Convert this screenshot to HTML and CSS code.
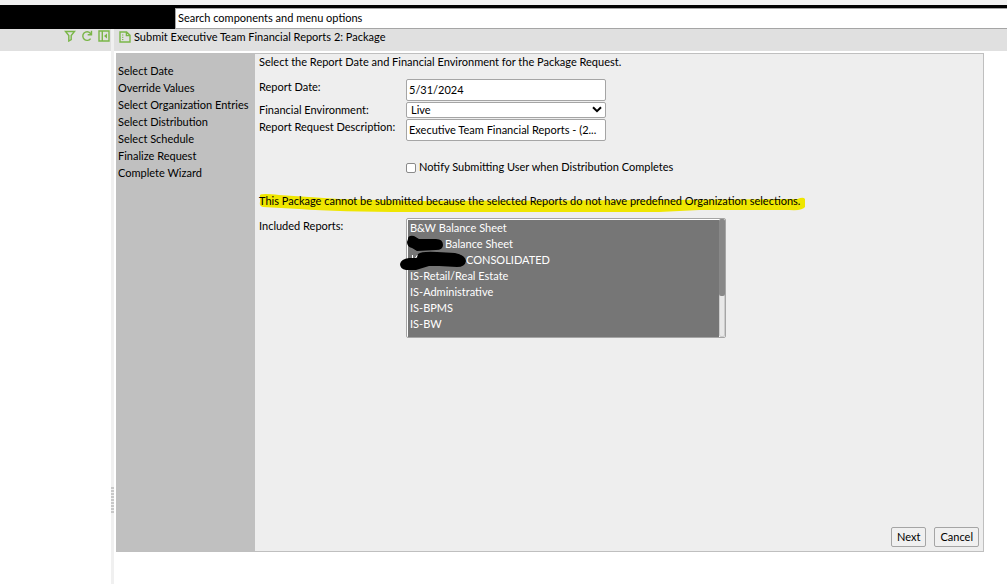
FILE: index.html
```html
<!DOCTYPE html>
<html lang="en">
<head>
<meta charset="utf-8">
<title>Submit Executive Team Financial Reports</title>
<link rel="stylesheet" href="styles.css">
</head>
<body>
<header class="topbar">
  <input class="search" type="text" aria-label="Search components and menu options" value="Search components and menu options">
</header>
<div class="workspace">
  <aside class="side">
    <div class="toolbar side-tools">
      <button class="tool" type="button" aria-label="Filter"><svg width="12" height="12" viewBox="0 0 12 12"><path d="M1.5 1.5h9L7.2 5.6v4L4.8 11V5.6z"/></svg></button>
      <button class="tool" type="button" aria-label="Refresh"><svg width="12" height="12" viewBox="0 0 12 12"><path d="M9.6 8.6A4.3 4.3 0 1 1 9.3 3.2L10.4 4.4M10.5.8v4H6.7"/></svg></button>
      <button class="tool" type="button" aria-label="Collapse panel"><svg width="12" height="12" viewBox="0 0 12 12"><path d="M1 1h10v10H1zM4.3 1v10"/><path class="solid" d="M9 3.6v4.8L6 6z"/></svg></button>
    </div>
  </aside>
  <div class="splitter"><span class="grip"></span></div>
  <main class="content">
    <div class="toolbar title">
      <svg width="12" height="12" viewBox="0 0 12 12"><path d="M1 1h6.6L11 4.4V11H1zM7.4 1v3.6H11"/><path class="thin" d="M3 4h1.4M3 6.3h1.4M3 8.6h1.4"/></svg>
      <span>Submit Executive Team Financial Reports 2: Package</span>
    </div>
    <form class="wizard">
      <nav class="steps">
        <span>Select Date</span>
        <span>Override Values</span>
        <span>Select Organization Entries</span>
        <span>Select Distribution</span>
        <span>Select Schedule</span>
        <span>Finalize Request</span>
        <span>Complete Wizard</span>
      </nav>
      <section class="page">
        <p class="intro">Select the Report Date and Financial Environment for the Package Request.</p>
        <div class="fields">
          <label for="date">Report Date:</label>
          <input class="box" id="date" type="text" value="5/31/2024">
          <label for="env">Financial Environment:</label>
          <div class="select-wrap">
            <select class="box pick" id="env"><option>Live</option></select>
            <svg class="chevron" width="10" height="7" viewBox="0 0 10 7"><path d="M1 1.2l4 4 4-4"/></svg>
          </div>
          <label for="desc">Report Request Description:</label>
          <input class="box" id="desc" type="text" value="Executive Team Financial Reports - (2...">
        </div>
        <div class="notify">
          <input class="check" id="notify" type="checkbox">
          <label for="notify">Notify Submitting User when Distribution Completes</label>
        </div>
        <p class="warning">
          <svg class="marker" viewBox="0 0 546 20" preserveAspectRatio="none"><path d="M1 2Q3 0 20 2L80 6 160 8 400 7 538 6Q545 3 546 7V13Q545 18 530 17L440 17 400 19H150Q80 19 40 16L4 14Q0 13 1 9z"/></svg>
          <span>This Package cannot be submitted because the selected Reports do not have predefined Organization selections.</span>
        </p>
        <div class="reports">
          <label for="reports">Included Reports:</label>
          <div class="list-wrap">
            <select class="list" id="reports" multiple size="7">
              <option>B&amp;W Balance Sheet</option>
              <option class="redacted-short">Balance Sheet</option>
              <option class="redacted-long">CONSOLIDATED</option>
              <option>IS-Retail/Real Estate</option>
              <option>IS-Administrative</option>
              <option>IS-BPMS</option>
              <option>IS-BW</option>
            </select>
            <span class="track"><span class="thumb"></span></span>
            <svg class="redaction" width="70" height="38" viewBox="0 0 70 38">
              <path class="remnant" d="M12.5 20v4M17.5 20l-2 3"/>
              <path d="M8 4Q8 0 14 1L19 4H36Q43 4 43 10 43 15 36 15L17 16 12 13Q7 12 7 7zM18 19Q22 16 37 17L55 18Q65 20 66 26 65 32 57 32L39 31 29 31 16 35H6Q0 34 0 29 1 24 9 23L17 23z"/>
            </svg>
          </div>
        </div>
        <footer class="actions">
          <button class="btn" type="button">Next</button>
          <button class="btn" type="button">Cancel</button>
        </footer>
      </section>
    </form>
  </main>
</div>
</body>
</html>
```
FILE: styles.css
```css
* { box-sizing: border-box; }
body {
  margin: 0;
  min-height: 100vh;
  display: flex;
  flex-direction: column;
  background: #fff;
  color: #000;
  font: 11px/16px Lato, "Liberation Sans", sans-serif;
}
input, select, button { font: inherit; color: inherit; margin: 0; }
p { margin: 0; }

.topbar {
  display: flex;
  border-top: 5px solid #f0f0f0;
  padding: 3px 0 0 175px;
  background: #000;
}
.search {
  flex: 1;
  min-width: 0;
  height: 21px;
  padding: 0 2px 3px;
  border: 1px solid #a5a5a5;
  border-right: 0;
  background: #fff;
}

.workspace { flex: 1; display: flex; }
.side { width: 111px; }
.splitter {
  width: 3px;
  display: flex;
  background: #f0f0f0;
}
.grip {
  width: 3px;
  height: 26px;
  margin-top: 458px;
  background: repeating-linear-gradient(#c8c8c8 0 2px, #f0f0f0 2px 3px);
}
.content {
  flex: 1;
  min-width: 0;
  display: flex;
  flex-direction: column;
}
.toolbar {
  height: 22px;
  display: flex;
  background: #e0e0e0;
}
.toolbar svg {
  display: block;
  fill: none;
  stroke: #7ab648;
  stroke-width: 1.4;
}
.toolbar .solid { fill: #7ab648; stroke: none; }
.toolbar .thin { stroke-width: 1; }
.side-tools {
  justify-content: flex-end;
  gap: 5px;
  padding: 1px 1px 0 0;
}
.tool {
  height: 12px;
  padding: 0;
  border: 0;
  background: none;
}
.title { gap: 3px; padding-left: 5px; }
.title svg { margin-top: 2px; }

.wizard {
  flex: 1;
  display: flex;
  margin: 2px 23px 32px 2px;
  border: 1px solid #bfbfbf;
  border-left: 0;
}
.steps {
  width: 139px;
  display: flex;
  flex-direction: column;
  padding: 8px 2px;
  background: #c0c0c0;
  line-height: 17px;
  white-space: nowrap;
}
.page {
  flex: 1;
  min-width: 0;
  display: flex;
  flex-direction: column;
  padding: 0 4px 4px;
  background: #eee;
}
.fields {
  display: grid;
  grid-template-columns: 147px 200px;
  row-gap: 1px;
  margin-top: 9px;
}
.box {
  width: 100%;
  height: 22px;
  padding: 0 2px 1px;
  border: 1px solid #a5a5a5;
  border-radius: 2px;
  background: #fff;
}
.pick { display: block; appearance: none; height: 16px; padding: 0 4px; line-height: 14px; }
.select-wrap { position: relative; height: 16px; }
.chevron {
  position: absolute;
  right: 4px;
  top: 4px;
  fill: none;
  stroke: #000;
  stroke-width: 2;
  pointer-events: none;
}
.notify {
  display: flex;
  gap: 3px;
  margin: 18px 0 0 147px;
}
.check {
  appearance: none;
  width: 10px;
  height: 10px;
  margin-top: 4px;
  border: 1px solid #8a8a8a;
  border-radius: 2px;
  background: #fff;
}
.warning { position: relative; align-self: flex-start; margin-top: 18px; padding-right: 5px; }
.warning span { position: relative; }
.marker {
  position: absolute;
  left: 0;
  top: 0;
  width: 100%;
  height: 20px;
  fill: #efe600;
}
.reports {
  display: grid;
  grid-template-columns: 147px 320px;
  margin-top: 9px;
}
.list-wrap {
  position: relative;
  display: flex;
  height: 120px;
  border: 1px solid #a5a5a5;
  border-radius: 2px;
  background: #fff;
}
.list {
  flex: 1;
  appearance: none;
  margin: 1px 0 0 1px;
  padding: 1px 0 0;
  border: 0;
  border-radius: 0;
  overflow: hidden;
  background: #767676;
  color: #fff;
}
.list option { min-height: 16px; padding: 0 2px; font: 11px/16px Lato, sans-serif; }
.list .redacted-short { padding-left: 37px; }
.list .redacted-long { padding-left: 58px; }
.track {
  width: 6px;
  border: 1px solid #ccc;
  border-radius: 2px;
  background: #e8e8e8;
}
.thumb {
  display: block;
  width: 6px;
  height: 77px;
  margin: -1px;
  border-radius: 2px;
  background: #888;
}
.redaction { position: absolute; left: -7px; top: 16px; pointer-events: none; }
.remnant { stroke: #fff; fill: none; }
.actions {
  display: flex;
  justify-content: flex-end;
  gap: 8px;
  margin-top: auto;
}
.btn {
  height: 20px;
  padding: 0 5px;
  border: 1px solid #a5a5a5;
  border-radius: 2px;
  background: #f0f0f0;
}
```
